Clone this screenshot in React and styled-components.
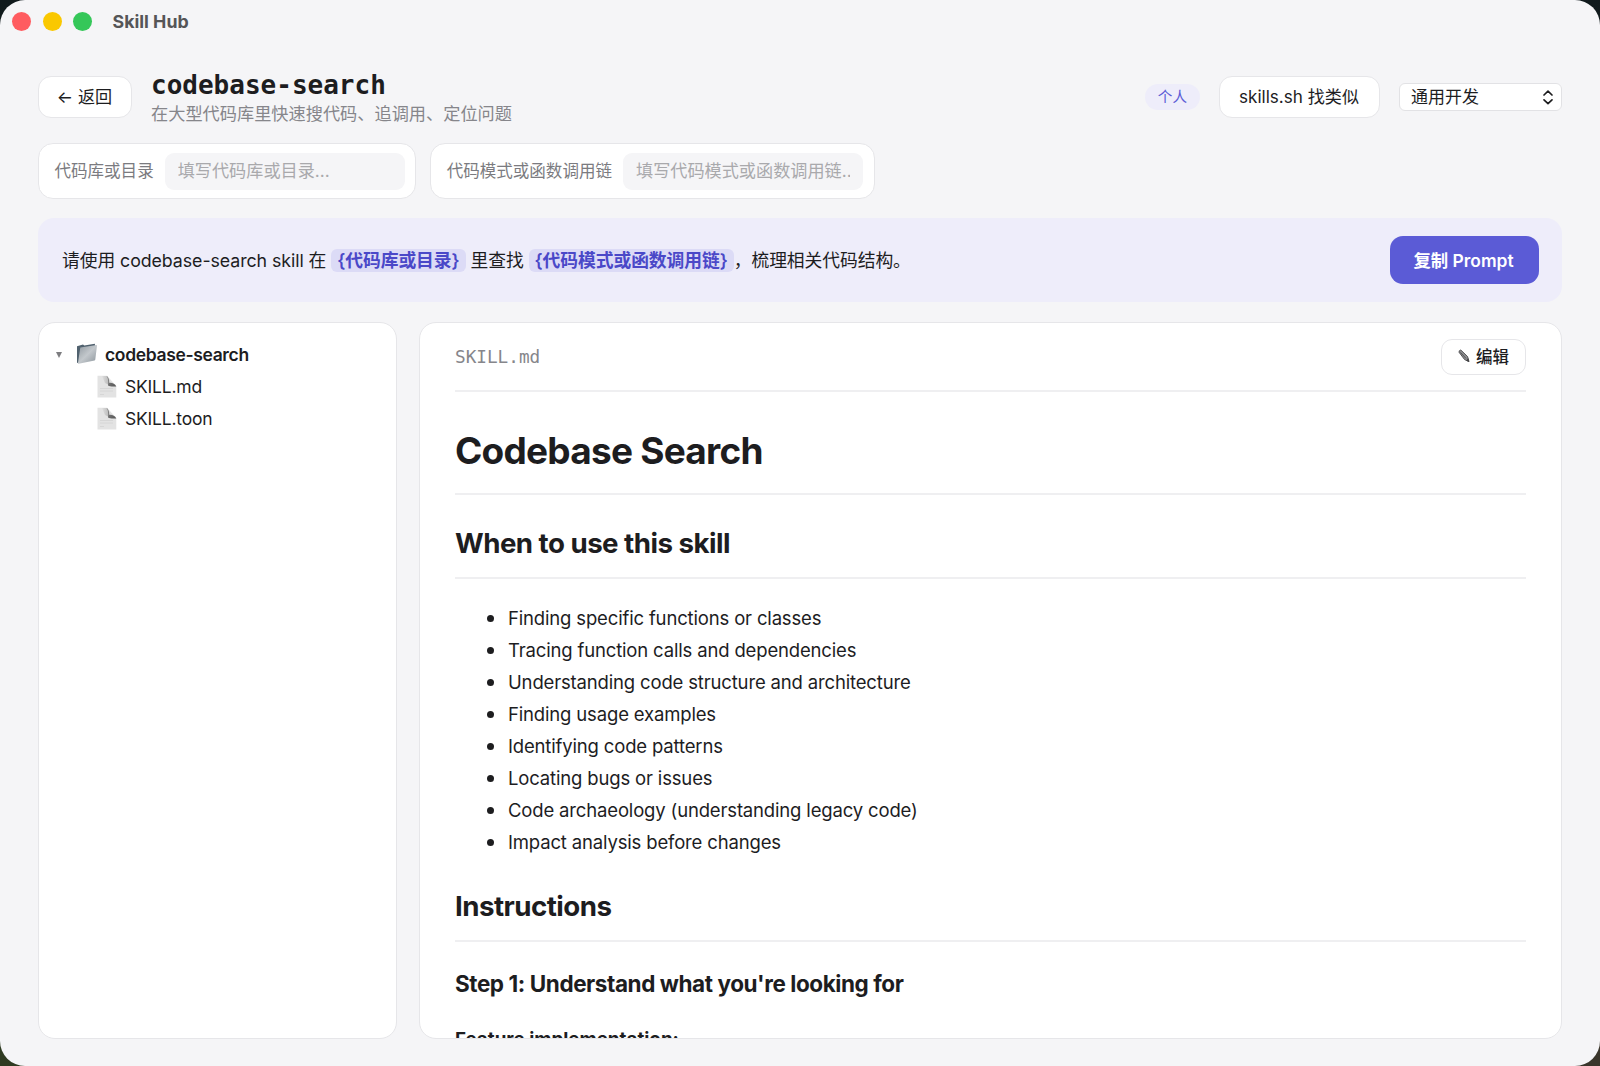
import React from 'react'
import styled, { createGlobalStyle } from 'styled-components';


const GlobalStyle = createGlobalStyle`
  *{
    box-sizing: border-box;
  }
  body{
    margin: 0;
    font-family: Inter, "Noto Sans CJK SC", sans-serif;
    color: #1d1d1f;
    background:
      linear-gradient(180deg, #101a1c 0%, transparent 50%),
      linear-gradient(90deg, #2f3b22 0%, #3a362c 100%);
  }
`;

const usos = [
  'Finding specific functions or classes',
  'Tracing function calls and dependencies',
  'Understanding code structure and architecture',
  'Finding usage examples',
  'Identifying code patterns',
  'Locating bugs or issues',
  'Code archaeology (understanding legacy code)',
  'Impact analysis before changes',
]

const FolderIcon = () =>(
  <svg width="22" height="22" viewBox="0 0 22 22">
    <defs>
      <linearGradient id="folder" x1="0" y1="0" x2="1" y2="1">
        <stop offset="0" stopColor="#8f989f" />
        <stop offset=".5" stopColor="#c3c8cc" />
        <stop offset="1" stopColor="#8b949b" />
      </linearGradient>
    </defs>
    <path d="M1 3.2 L7 1.6 L8.3 2.6 L18.8 .8 L19.2 3 L2.5 19.5 L1 20 Z" fill="#50616e" />
    <path d="M4.3 4.6 L20.6 2 Q21 2 21 2.6 L19.3 16.6 Q19.2 17.2 18.6 17.4 L2.6 20.8 Q1.8 21 1.9 20.2 Z" fill="url(#folder)" />
  </svg>
)

const FileIcon = () =>(
  <svg width="20" height="23" viewBox="0 0 20 23">
    <defs>
      <linearGradient id="fold" x1="0" y1="0" x2="1" y2="1">
        <stop offset="0" stopColor="#8a8a8a" />
        <stop offset="1" stopColor="#555" />
      </linearGradient>
      <linearGradient id="curl" x1="0" y1="0" x2="1" y2="0">
        <stop offset="0" stopColor="#dedede" />
        <stop offset="1" stopColor="#b9b9b9" />
      </linearGradient>
    </defs>
    <path d="M.5 .8 H10 L19.3 11 V22.5 H.5 Z" fill="#e3e3e3" />
    <path d="M5 1 H10 L12 10 L8 8 Z" fill="url(#curl)" />
    <path d="M9.6 .8 C11.5 2 12.5 5 12.2 7.8 C15 7.4 18 8.6 19.3 11.4 C16.5 11.6 13 11.8 11 10.6 C11.6 7 11 3.6 9.6 .8 Z" fill="url(#fold)" />
    <path d="M3 13.5 H16 M3 16 H16 M3 19.5 H7" stroke="#d3d3d3" strokeWidth=".8" />
  </svg>
)

const PencilIcon = () =>(
  <svg width="12" height="14" viewBox="0 0 12 14">
    <path d="M1 3.2 Q.8 1.4 2.8 1 L9.6 7.6 L10.9 12.6 L6.6 10.6 Z" fill="#8d8d8f" stroke="#47474a" strokeWidth=".9" />
    <path d="M2.4 3.4 L8 9.4 M8.6 11.4 L10.9 12.6 L10.2 9.8 Z" fill="#333" stroke="#47474a" strokeWidth=".8" />
  </svg>
)

const SelectIcon = () =>(
  <svg width="12" height="16" viewBox="0 0 12 16" fill="none" stroke="#1d1d1f" strokeWidth="1.7" strokeLinecap="round" strokeLinejoin="round">
    <path d="M2 6 L6 2.2 L10 6" />
    <path d="M2 10.8 L6 14.6 L10 10.8" />
  </svg>
)

const App = () =>{
  return(
    <>
      <GlobalStyle />
      <Ventana>
        <BarraTitulo>
          <Semaforo color="#ff5c60" />
          <Semaforo color="#fac800" />
          <Semaforo color="#35c759" />
          <NombreApp>Skill Hub</NombreApp>
        </BarraTitulo>
        <Contenido>
          <Cabecera>
            <Boton ancho="94px">← 返回</Boton>
            <Titulos>
              <Titulo>codebase-search</Titulo>
              <Subtitulo>在大型代码库里快速搜代码、追调用、定位问题</Subtitulo>
            </Titulos>
            <Etiqueta>个人</Etiqueta>
            <Boton ancho="161px">skills.sh 找类似</Boton>
            <Selector>
              <span>通用开发</span>
              <SelectIcon />
            </Selector>
          </Cabecera>
          <Campos>
            <Campo>
              <span>代码库或目录</span>
              <Entrada placeholder="填写代码库或目录..." />
            </Campo>
            <Campo>
              <span>代码模式或函数调用链</span>
              <Entrada placeholder="填写代码模式或函数调用链..." />
            </Campo>
          </Campos>
          <Aviso>
            <TextoAviso>
              请使用 codebase-search skill 在 <Variable>{'{代码库或目录}'}</Variable> 里查找 <Variable>{'{代码模式或函数调用链}'}</Variable>，梳理相关代码结构。
            </TextoAviso>
            <BotonPrimario>复制 Prompt</BotonPrimario>
          </Aviso>
          <Paneles>
            <Arbol>
              <Carpeta>
                <Flecha />
                <FolderIcon />
                codebase-search
              </Carpeta>
              <Archivo><FileIcon />SKILL.md</Archivo>
              <Archivo><FileIcon />SKILL.toon</Archivo>
            </Arbol>
            <Documento>
              <BarraDocumento>
                <NombreArchivo>SKILL.md</NombreArchivo>
                <BotonEditar><PencilIcon />编辑</BotonEditar>
              </BarraDocumento>
              <H1>Codebase Search</H1>
              <H2>When to use this skill</H2>
              <Lista>
                {usos.map(uso => <li key={uso}>{uso}</li>)}
              </Lista>
              <H2>Instructions</H2>
              <H3>Step 1: Understand what you're looking for</H3>
              <Parrafo>Feature implementation:</Parrafo>
            </Documento>
          </Paneles>
        </Contenido>
      </Ventana>
    </>
  )
}

const Ventana = styled.div`
  width: 1600px;
  height: 1066px;
  display: flex;
  flex-direction: column;
  overflow: hidden;
  border-radius: 25px;
  background: #f5f5f7;
`;

const BarraTitulo = styled.div`
  height: 43px;
  flex: none;
  display: flex;
  align-items: center;
  gap: 11.5px;
  padding-left: 12px;
`;

const Semaforo = styled.span`
  width: 19px;
  height: 19px;
  border-radius: 50%;
  background: ${props => props.color};
`;

const NombreApp = styled.span`
  margin-left: 9px;
  font-size: 17.8px;
  font-weight: 700;
  color: #555557;
`;

const Contenido = styled.div`
  flex: 1;
  min-height: 0;
  display: flex;
  flex-direction: column;
  padding: 25px 38px 27px;
`;

const Cabecera = styled.header`
  height: 57px;
  flex: none;
  display: flex;
  align-items: center;
  gap: 19px;
`;

const Boton = styled.button`
  width: ${props => props.ancho};
  height: 42px;
  padding: 0 1px 3px 0;
  border: 1px solid #e6e6e9;
  border-radius: 13px;
  background: white;
  color: #1d1d1f;
  font-family: inherit;
  font-size: 17.1px;
  white-space: nowrap;
`;

const Titulos = styled.div`
  flex: 1;
  display: flex;
  flex-direction: column;
  gap: 2px;
  padding-top: 3px;
`;

const Titulo = styled.h1`
  margin: 0;
  font-family: "DejaVu Sans Mono", monospace;
  font-size: 26px;
  font-weight: 700;
  line-height: 30px;
`;

const Subtitulo = styled.p`
  margin: 0;
  font-size: 17.2px;
  line-height: 24px;
  color: #86868b;
`;

const Etiqueta = styled.span`
  height: 26px;
  padding: 0 13px;
  border-radius: 13px;
  background: #eeedfa;
  color: #5b5bd6;
  font-size: 14.6px;
  line-height: 27px;
`;

const Selector = styled.div`
  width: 163px;
  height: 28px;
  display: flex;
  align-items: center;
  justify-content: space-between;
  padding: 0 7px 0 11px;
  border: 1px solid #e2e2e5;
  border-radius: 6px;
  background: white;
  font-size: 17px;
  span{
    padding-bottom: 2px;
  }
`;

const Campos = styled.div`
  display: flex;
  gap: 14px;
  margin-top: 18px;
`;

const Campo = styled.label`
  height: 56px;
  display: flex;
  align-items: center;
  gap: 11px;
  padding: 0 10.5px 0 15.5px;
  border: 1px solid #e6e6e9;
  border-radius: 15px;
  background: white;
  color: #7b7b80;
  font-size: 16.55px;
  span{
    padding-bottom: 2px;
  }
`;

const Entrada = styled.input`
  width: 240px;
  height: 37px;
  padding: 0 13px 2px;
  border: none;
  border-radius: 9px;
  outline: none;
  background: #f5f5f7;
  font-family: inherit;
  font-size: 17.15px;
  &::placeholder{
    color: #a9a9ac;
  }
`;

const Aviso = styled.div`
  height: 84px;
  flex: none;
  display: flex;
  align-items: center;
  justify-content: space-between;
  margin-top: 19px;
  padding: 0 24px;
  border-radius: 16px;
  background: #eeedfa;
`;

const TextoAviso = styled.p`
  margin: 0;
  padding-bottom: 2px;
  font-size: 17.8px;
  letter-spacing: -.07px;
  white-space: nowrap;
`;

const Variable = styled.span`
  padding: 1px 6px;
  border-radius: 6px;
  background: #dcdbf6;
  color: #4a48c8;
  font-weight: 600;
`;

const BotonPrimario = styled.button`
  width: 149px;
  height: 48px;
  padding: 0 1px 2px 0;
  margin-right: -.5px;
  border: none;
  border-radius: 13px;
  background: #5b5bd6;
  color: white;
  font-family: inherit;
  font-size: 17.4px;
  font-weight: 600;
`;

const Paneles = styled.div`
  flex: 1;
  min-height: 0;
  display: flex;
  gap: 22px;
  margin-top: 20px;
`;

const Panel = styled.div`
  border: 1px solid #e6e6e9;
  border-radius: 17px;
  background: white;
  overflow: hidden;
`;

const Arbol = styled(Panel)`
  width: 359px;
  flex: none;
  padding: 15px 16px;
`;

const Fila = styled.div`
  height: 32px;
  display: flex;
  align-items: center;
  font-size: 17.5px;
  letter-spacing: -.2px;
`;

const Carpeta = styled(Fila)`
  gap: 7px;
  font-weight: 600;
  letter-spacing: -.35px;
`;

const Flecha = styled.span`
  margin: 2px 7px 0 1px;
  border: 3px solid transparent;
  border-top: 6px solid #7d7d80;
  border-bottom: none;
`;

const Archivo = styled(Fila)`
  gap: 8px;
  padding-left: 42px;
`;

const Documento = styled(Panel)`
  flex: 1;
  padding: 0 35px;
`;

const BarraDocumento = styled.div`
  height: 69px;
  display: flex;
  align-items: center;
  justify-content: space-between;
  border-bottom: 2px solid #efeff1;
`;

const NombreArchivo = styled.span`
  font-family: "DejaVu Sans Mono", monospace;
  font-size: 17.7px;
  color: #86868b;
`;

const BotonEditar = styled.button`
  width: 85px;
  height: 36px;
  display: flex;
  align-items: center;
  justify-content: center;
  gap: 6px;
  padding: 0 0 1px;
  border: 1px solid #e6e6e9;
  border-radius: 11px;
  background: white;
  color: #1d1d1f;
  font-family: inherit;
  font-size: 16.5px;
  font-weight: 500;
`;

const H1 = styled.h1`
  height: 103px;
  margin: 0;
  padding-top: 36px;
  border-bottom: 2px solid #efeff1;
  font-size: 37px;
  font-weight: 700;
  line-height: 46px;
  letter-spacing: -.77px;
`;

const H2 = styled.h2`
  height: 84px;
  margin: 0;
  padding-top: 30px;
  border-bottom: 2px solid #efeff1;
  font-size: 27.7px;
  font-weight: 700;
  line-height: 36px;
  letter-spacing: -.53px;
`;

const Lista = styled.ul`
  margin: 0;
  padding: 23px 0 0 32px;
  list-style: none;
  font-size: 18.5px;
  line-height: 32px;
  letter-spacing: -.16px;
  li{
    display: flex;
    align-items: center;
  }
  li::before{
    content: '';
    width: 7px;
    height: 7px;
    margin-right: 14px;
    border-radius: 50%;
    background: #1d1d1f;
  }
`;

const H3 = styled.h3`
  margin: 27px 0 25px;
  font-size: 22.5px;
  font-weight: 700;
  line-height: 30px;
  letter-spacing: -.43px;
`;

const Parrafo = styled.p`
  margin: 0;
  font-size: 18.8px;
  font-weight: 700;
  line-height: 32px;
`;


export default App
